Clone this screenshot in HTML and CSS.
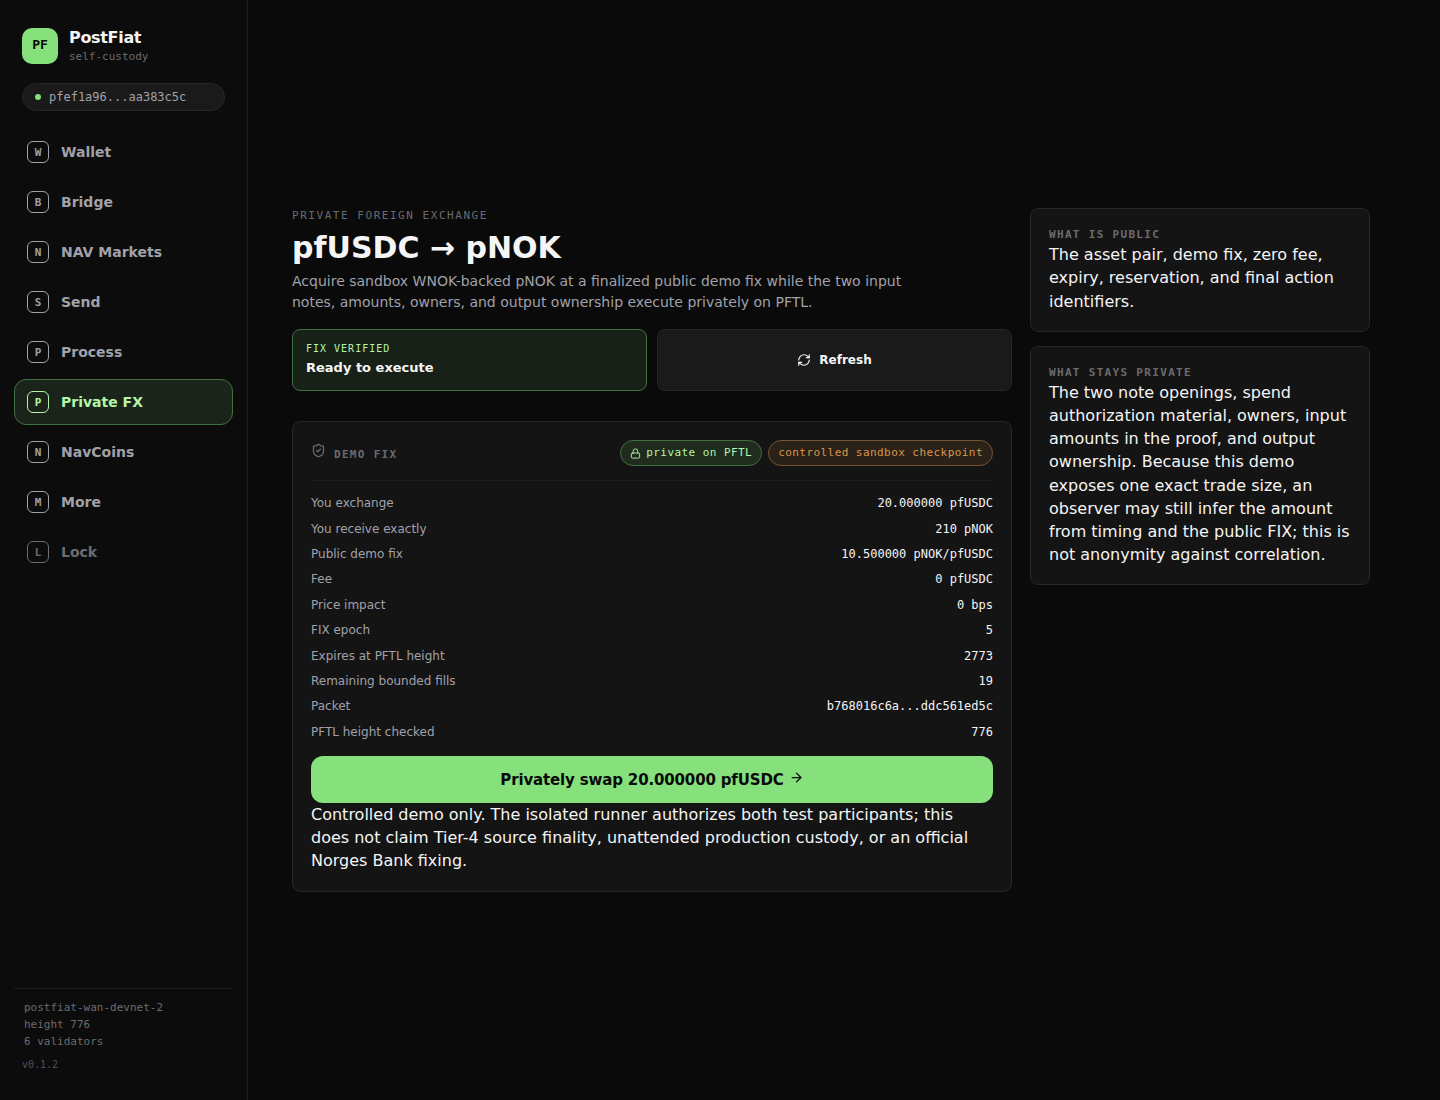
FILE: index.html
```html
<!DOCTYPE html>
<html lang="en">
  <head>
    <meta charset="UTF-8" />
    <meta name="viewport" content="width=device-width, initial-scale=1.0" />
    <title>PostFiat - Private FX</title>
    <link rel="stylesheet" href="styles.css">
  </head>
  <body>
    <div class="app">
      <aside class="sidebar">
        <div class="brand">
          <div class="logo">PF</div>
          <div>
            <div class="brand-name">PostFiat</div>
            <div class="brand-sub">self-custody</div>
          </div>
        </div>
        <div class="address"><span class="dot"></span>pfef1a96...aa383c5c</div>
        <nav class="nav">
          <a href="#wallet" class="nav-item"><span class="nav-key">W</span>Wallet</a>
          <a href="#bridge" class="nav-item"><span class="nav-key">B</span>Bridge</a>
          <a href="#markets" class="nav-item"><span class="nav-key">N</span>NAV Markets</a>
          <a href="#send" class="nav-item"><span class="nav-key">S</span>Send</a>
          <a href="#process" class="nav-item"><span class="nav-key">P</span>Process</a>
          <a href="#fx" class="nav-item active"><span class="nav-key">P</span>Private FX</a>
          <a href="#navcoins" class="nav-item"><span class="nav-key">N</span>NavCoins</a>
          <a href="#more" class="nav-item"><span class="nav-key">M</span>More</a>
          <button type="button" class="nav-item lock"><span class="nav-key">L</span>Lock</button>
        </nav>
        <div class="side-footer">
          <div class="network">
            <div>postfiat-wan-devnet-2</div>
            <div>height 776</div>
            <div>6 validators</div>
          </div>
          <div class="version">v0.1.2</div>
        </div>
      </aside>

      <main class="main">
        <section class="content">
          <div class="eyebrow">PRIVATE FOREIGN EXCHANGE</div>
          <h1>pfUSDC → pNOK</h1>
          <p class="lead">Acquire sandbox WNOK-backed pNOK at a finalized public demo fix while the two input notes, amounts, owners, and output ownership execute privately on PFTL.</p>

          <div class="actions">
            <div class="status">
              <span class="status-label">FIX VERIFIED</span>
              <strong>Ready to execute</strong>
            </div>
            <button type="button" class="refresh">
              <svg class="icon" width="14" height="14" viewBox="0 0 24 24">
                <path d="M3 12a9 9 0 0 1 9-9 9.75 9.75 0 0 1 6.74 2.74L21 8" />
                <path d="M21 3v5h-5" />
                <path d="M21 12a9 9 0 0 1-9 9 9.75 9.75 0 0 1-6.74-2.74L3 16" />
                <path d="M8 16H3v5" />
              </svg>
              Refresh
            </button>
          </div>

          <div class="card">
            <div class="card-head">
              <h2 class="label">
                <svg class="icon" width="15" height="15" viewBox="0 0 24 24">
                  <path d="M20 13c0 5-3.5 7.5-7.66 8.95a1 1 0 0 1-.67-.01C7.5 20.5 4 18 4 13V6a1 1 0 0 1 1-1c2 0 4.5-1.2 6.24-2.72a1.17 1.17 0 0 1 1.52 0C14.51 3.81 17 5 19 5a1 1 0 0 1 1 1z" />
                  <path d="m9 12 2 2 4-4" />
                </svg>
                DEMO FIX
              </h2>
              <div class="badges">
                <span class="badge green">
                  <svg class="icon" width="11" height="11" viewBox="0 0 24 24">
                    <rect x="3" y="11" width="18" height="11" rx="2" />
                    <path d="M7 11V7a5 5 0 0 1 10 0v4" />
                  </svg>
                  private on PFTL
                </span>
                <span class="badge orange">controlled sandbox checkpoint</span>
              </div>
            </div>

            <dl class="rows">
              <div class="row"><dt>You exchange</dt><dd>20.000000 pfUSDC</dd></div>
              <div class="row"><dt>You receive exactly</dt><dd>210 pNOK</dd></div>
              <div class="row"><dt>Public demo fix</dt><dd>10.500000 pNOK/pfUSDC</dd></div>
              <div class="row"><dt>Fee</dt><dd>0 pfUSDC</dd></div>
              <div class="row"><dt>Price impact</dt><dd>0 bps</dd></div>
              <div class="row"><dt>FIX epoch</dt><dd>5</dd></div>
              <div class="row"><dt>Expires at PFTL height</dt><dd>2773</dd></div>
              <div class="row"><dt>Remaining bounded fills</dt><dd>19</dd></div>
              <div class="row"><dt>Packet</dt><dd>b768016c6a...ddc561ed5c</dd></div>
              <div class="row"><dt>PFTL height checked</dt><dd>776</dd></div>
            </dl>

            <button type="button" class="swap">
              Privately swap 20.000000 pfUSDC
              <svg class="icon" width="15" height="15" viewBox="0 0 24 24">
                <path d="M5 12h14" />
                <path d="m12 5 7 7-7 7" />
              </svg>
            </button>
            <p>Controlled demo only. The isolated runner authorizes both test participants; this does not claim Tier-4 source finality, unattended production custody, or an official Norges Bank fixing.</p>
          </div>
        </section>

        <aside class="notes">
          <div class="card">
            <h2 class="label">WHAT IS PUBLIC</h2>
            <p>The asset pair, demo fix, zero fee, expiry, reservation, and final action identifiers.</p>
          </div>
          <div class="card">
            <h2 class="label">WHAT STAYS PRIVATE</h2>
            <p>The two note openings, spend authorization material, owners, input amounts in the proof, and output ownership. Because this demo exposes one exact trade size, an observer may still infer the amount from timing and the public FIX; this is not anonymity against correlation.</p>
          </div>
        </aside>
      </main>
    </div>
  </body>
</html>
```

FILE: styles.css
```css
:root {
  --bg: #0a0a0a;
  --side: #0c0c0c;
  --card: #141414;
  --raised: #1a1a1a;
  --line: #1f1f1f;
  --line-strong: #262626;
  --text: #f5f5f5;
  --muted: #a1a1aa;
  --dim: #6b6b70;
  --green: #86e07c;
  --green-text: #b4f5a8;
  --mono: "DejaVu Sans Mono", monospace;
}

* {
  box-sizing: border-box;
  margin: 0;
  padding: 0;
}

body {
  background-color: var(--bg);
  color: var(--text);
  font-family: "DejaVu Sans", sans-serif;
  font-size: 16px;
  line-height: 1.45;
}

button {
  font-family: inherit;
  cursor: pointer;
}

.icon {
  fill: none;
  stroke: currentColor;
  stroke-width: 2;
  stroke-linecap: round;
  stroke-linejoin: round;
}

.app {
  display: grid;
  grid-template-columns: 248px 1fr;
  min-height: 100vh;
}

/* sidebar */
.sidebar {
  display: flex;
  flex-direction: column;
  padding: 28px 14px;
  background-color: var(--side);
  border-right: 1px solid var(--line);
}

.brand {
  display: flex;
  align-items: flex-start;
  gap: 11px;
  padding: 0 8px;
}

.logo {
  width: 36px;
  height: 36px;
  border-radius: 10px;
  background-color: var(--green);
  color: var(--bg);
  font: bold 13px/34px var(--mono);
  text-align: center;
}

.brand-name {
  line-height: 20px;
  font-weight: bold;
  letter-spacing: -0.02em;
}

.brand-sub {
  color: var(--dim);
  font: 11px/18px var(--mono);
}

.address {
  display: flex;
  align-items: center;
  gap: 8px;
  height: 28px;
  margin: 17px 8px 18px;
  padding: 0 12px;
  border: 1px solid var(--line-strong);
  border-radius: 14px;
  background-color: var(--raised);
  color: var(--muted);
  font: 12px var(--mono);
}

.dot {
  width: 6px;
  height: 6px;
  border-radius: 50%;
  background-color: var(--green);
}

.nav {
  display: flex;
  flex-direction: column;
  gap: 4px;
}

.nav-item {
  display: flex;
  align-items: center;
  gap: 12px;
  height: 46px;
  padding: 0 12px;
  border: 1px solid transparent;
  border-radius: 12px;
  background: none;
  color: var(--muted);
  font-size: 14px;
  font-weight: bold;
  text-decoration: none;
}

.nav-item.active {
  background-color: #1b241a;
  border-color: #417040;
  color: var(--green-text);
}

.nav-item.lock {
  color: var(--dim);
}

.nav-key {
  width: 22px;
  height: 22px;
  border: 1px solid currentColor;
  border-radius: 6px;
  font: bold 11px/22px var(--mono);
  text-align: center;
}

.side-footer {
  margin-top: auto;
  padding-top: 10px;
  border-top: 1px solid var(--line);
  font-family: var(--mono);
}

.network {
  padding: 0 10px;
  color: var(--dim);
  font-size: 11px;
  line-height: 17px;
}

.version {
  padding: 7px 8px 0;
  color: #505055;
  font-size: 10px;
  line-height: 15px;
}

/* page */
.main {
  display: grid;
  grid-template-columns: minmax(0, 720px) minmax(0, 340px);
  align-content: center;
  align-items: start;
  gap: 18px;
  padding: 44px;
}

.eyebrow {
  color: var(--dim);
  font: 11px/1.45 var(--mono);
  letter-spacing: 0.14em;
}

h1 {
  margin: 6px 0 5px;
  font-size: 30px;
  line-height: 36px;
}

.lead {
  max-width: 640px;
  color: var(--muted);
  font-size: 14px;
  line-height: 21px;
}

.actions {
  display: grid;
  grid-template-columns: 1fr 1fr;
  gap: 10px;
  margin: 16px 0 30px;
}

.status,
.refresh {
  min-height: 62px;
  border: 1px solid var(--line-strong);
  border-radius: 8px;
}

.status {
  display: flex;
  flex-direction: column;
  gap: 3px;
  padding: 11px 13px;
  background-color: #182118;
  border-color: #417040;
  font-size: 13px;
}

.status-label {
  color: var(--green-text);
  font: 10px/15px var(--mono);
  letter-spacing: 0.1em;
}

.refresh {
  display: flex;
  align-items: center;
  justify-content: center;
  gap: 8px;
  background-color: var(--raised);
  color: var(--text);
  font-size: 12px;
  font-weight: bold;
}

.card {
  padding: 18px;
  border: 1px solid var(--line-strong);
  border-radius: 8px;
  background-color: var(--card);
}

.label {
  color: var(--dim);
  font: bold 11px/1.45 var(--mono);
  letter-spacing: 0.12em;
}

.card-head {
  display: flex;
  align-items: center;
  justify-content: space-between;
  padding-bottom: 14px;
  border-bottom: 1px solid var(--line);
}

.badges {
  display: flex;
  gap: 6px;
}

.badge {
  display: flex;
  align-items: center;
  gap: 5px;
  padding: 4px 9px;
  border: 1px solid;
  border-radius: 13px;
  font: 11px/1.45 var(--mono);
  letter-spacing: 0.04em;
}

.badge.green {
  background-color: #1f2c1e;
  border-color: #417040;
  color: var(--green-text);
}

.badge.orange {
  background-color: #2a2119;
  border-color: #735530;
  color: #d9964a;
}

.rows {
  padding: 10px 0 11px;
}

.row {
  display: flex;
  justify-content: space-between;
  padding: 4px 0;
  font-size: 12px;
}

.row dt {
  color: var(--muted);
}

.row dd {
  font-family: var(--mono);
}

.swap {
  width: 100%;
  height: 47px;
  border: none;
  border-radius: 12px;
  background-color: var(--green);
  color: var(--bg);
  font-size: 15px;
  font-weight: bold;
  letter-spacing: -0.01em;
}

.notes {
  display: grid;
  gap: 14px;
}
```
